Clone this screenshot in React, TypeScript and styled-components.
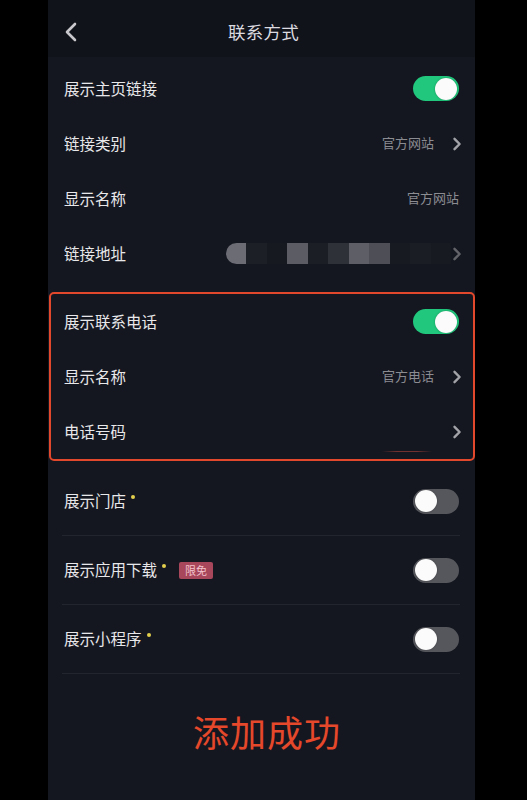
import React from 'react';
import styled, { createGlobalStyle } from 'styled-components';

const Global = createGlobalStyle`
  html, body { margin: 0; padding: 0; background: #000; }
  body { font-family: "Noto Sans CJK SC", "Noto Sans", sans-serif; -webkit-font-smoothing: antialiased; }
`;

const Stage = styled.div`
  display: flex;
  padding-left: 48px;
  min-height: 800px;
  background: #000;
`;

const Panel = styled.main`
  width: 427px;
  min-height: 800px;
  background: #151720;
  display: flex;
  flex-direction: column;
`;

const Header = styled.header`
  height: 57px;
  box-sizing: border-box;
  padding-top: 6px;
  display: grid;
  grid-template-columns: 60px 1fr 60px;
  align-items: center;
  background: #11131a;
`;

const BackButton = styled.button`
  border: 0;
  background: none;
  padding: 0 0 0 16px;
  display: flex;
  align-items: center;
  cursor: pointer;
`;

const Title = styled.h1`
  margin: 0;
  text-align: center;
  font-size: 17.5px;
  font-weight: 400;
  color: #dcdce0;
  letter-spacing: 0.3px;
  padding-left: 4px;
`;

const List = styled.section`
  padding-top: 4px;
  display: flex;
  flex-direction: column;
`;

const Row = styled.div<{ $boxed?: boolean; $tall?: boolean }>`
  height: ${p => (p.$tall ? '68px' : '55px')};
  box-sizing: border-box;
  display: flex;
  align-items: center;
  padding: ${p => (p.$boxed ? '0 14px 0 13px' : '0 16px')};
`;

const Label = styled.span`
  font-size: 15.5px;
  color: #e8e8ea;
  white-space: nowrap;
  transform: translateY(-1px);
`;

const LabelGroup = styled.div`
  display: flex;
  align-items: center;
  flex: 1;
`;

const Dot = styled.span`
  width: 4px;
  height: 4px;
  border-radius: 50%;
  background: #e2cf4c;
  margin: 0 0 8px 5px;
`;

const Badge = styled.span`
  margin-left: 13px;
  height: 17px;
  padding: 0 6px;
  display: inline-flex;
  align-items: center;
  background: #a8465b;
  color: #f2c3cc;
  font-size: 11px;
  border-radius: 2px;
`;

const Value = styled.span`
  font-size: 13px;
  color: #8b8c92;
  white-space: nowrap;
  transform: translateY(-1px);
`;

const ChevronWrap = styled.span<{ $dim?: boolean; $tight?: boolean }>`
  display: flex;
  margin: ${p => (p.$tight ? '0 -3px 0 1px' : '0 -3px 0 18px')};
  opacity: ${p => (p.$dim ? 0.55 : 1)};
`;

const Track = styled.span<{ $on?: boolean }>`
  width: 46px;
  height: 25px;
  border-radius: 13px;
  background: ${p => (p.$on ? '#20c77c' : '#56575d')};
  display: flex;
  align-items: center;
  justify-content: ${p => (p.$on ? 'flex-end' : 'flex-start')};
  padding: 0 2px;
  box-sizing: border-box;
`;

const Knob = styled.span`
  width: 22px;
  height: 22px;
  border-radius: 50%;
  background: #fbfbfb;
  box-shadow: 0 0 2px rgba(0, 0, 0, 0.3);
`;

const Mosaic = styled.div`
  display: flex;
  height: 21px;
`;

const Tile = styled.span<{ $c: string; $round?: boolean }>`
  width: 20.5px;
  height: 21px;
  background: ${p => p.$c};
  border-radius: ${p => (p.$round ? '11px 0 0 11px' : '0')};
`;

const PhoneMask = styled.span`
  width: 89px;
  height: 40px;
  box-sizing: border-box;
  background-image: linear-gradient(to right, rgba(190, 70, 60, 0), rgba(190, 70, 60, 0.55) 30%, rgba(190, 70, 60, 0.55) 70%, rgba(190, 70, 60, 0));
  background-size: 50px 1px;
  background-position: right 2px bottom 0;
  background-repeat: no-repeat;
`;

const HighlightBox = styled.div`
  margin: 11px 0 0 1px;
  border: 2px solid #e2482b;
  border-radius: 5px;
  display: flex;
  flex-direction: column;
`;

const Section = styled.div`
  margin-top: 6px;
  display: flex;
  flex-direction: column;
`;

const Divider = styled.div`
  height: 1px;
  margin: 0 15px 0 14px;
  background: #23252e;
`;

const Success = styled.div`
  margin-top: 35px;
  text-align: center;
  padding-left: 11px;
  font-size: 36px;
  line-height: 44px;
  color: #e5482a;
  letter-spacing: 1px;
`;

const ChevronIcon = () => (
  <svg width="10" height="14" viewBox="0 0 10 14" fill="none">
    <path d="M2.5 1.8 L7.6 7 L2.5 12.2" stroke="#a2a3a8" strokeWidth="2.4" strokeLinecap="round" strokeLinejoin="round" />
  </svg>
);

const Chevron: React.FC<{ dim?: boolean; tight?: boolean }> = ({ dim, tight }) => (
  <ChevronWrap $dim={dim} $tight={tight}>
    <ChevronIcon />
  </ChevronWrap>
);

const Toggle: React.FC<{ on?: boolean }> = ({ on }) => (
  <Track $on={on}>
    <Knob />
  </Track>
);

const tiles = [
  { c: '#6b6c74', round: true },
  { c: '#1d1f27' },
  { c: '#171921' },
  { c: '#5b5c64' },
  { c: '#1c1e26' },
  { c: '#2f3139' },
  { c: '#5d5e66' },
  { c: '#4d4e56' },
  { c: '#181a22' },
  { c: '#1b1d25' },
  { c: '#181a22' },
];

export default function App() {
  return (
    <>
      <Global />
      <Stage>
        <Panel>
          <Header>
            <BackButton aria-label="返回">
              <svg width="14" height="20" viewBox="0 0 14 20" fill="none">
                <path d="M11 2 L3 10 L11 18" stroke="#c9c9cd" strokeWidth="2.6" strokeLinecap="round" strokeLinejoin="round" />
              </svg>
            </BackButton>
            <Title>联系方式</Title>
            <span />
          </Header>

          <List>
            <Row>
              <LabelGroup><Label>展示主页链接</Label></LabelGroup>
              <Toggle on />
            </Row>
            <Row>
              <LabelGroup><Label>链接类别</Label></LabelGroup>
              <Value>官方网站</Value>
              <Chevron />
            </Row>
            <Row>
              <LabelGroup><Label>显示名称</Label></LabelGroup>
              <Value>官方网站</Value>
            </Row>
            <Row>
              <LabelGroup><Label>链接地址</Label></LabelGroup>
              <Mosaic>
                {tiles.map((t, i) => (
                  <Tile key={i} $c={t.c} $round={t.round} />
                ))}
              </Mosaic>
              <Chevron dim tight />
            </Row>

            <HighlightBox>
              <Row $boxed>
                <LabelGroup><Label>展示联系电话</Label></LabelGroup>
                <Toggle on />
              </Row>
              <Row $boxed>
                <LabelGroup><Label>显示名称</Label></LabelGroup>
                <Value>官方电话</Value>
                <Chevron />
              </Row>
              <Row $boxed>
                <LabelGroup><Label>电话号码</Label></LabelGroup>
                <PhoneMask />
                <Chevron />
              </Row>
            </HighlightBox>

            <Section>
              <Row $tall>
                <LabelGroup><Label>展示门店</Label><Dot /></LabelGroup>
                <Toggle />
              </Row>
              <Divider />
              <Row $tall>
                <LabelGroup><Label>展示应用下载</Label><Dot /><Badge>限免</Badge></LabelGroup>
                <Toggle />
              </Row>
              <Divider />
              <Row $tall>
                <LabelGroup><Label>展示小程序</Label><Dot /></LabelGroup>
                <Toggle />
              </Row>
              <Divider />
            </Section>

            <Success>添加成功</Success>
          </List>
        </Panel>
      </Stage>
    </>
  );
}
